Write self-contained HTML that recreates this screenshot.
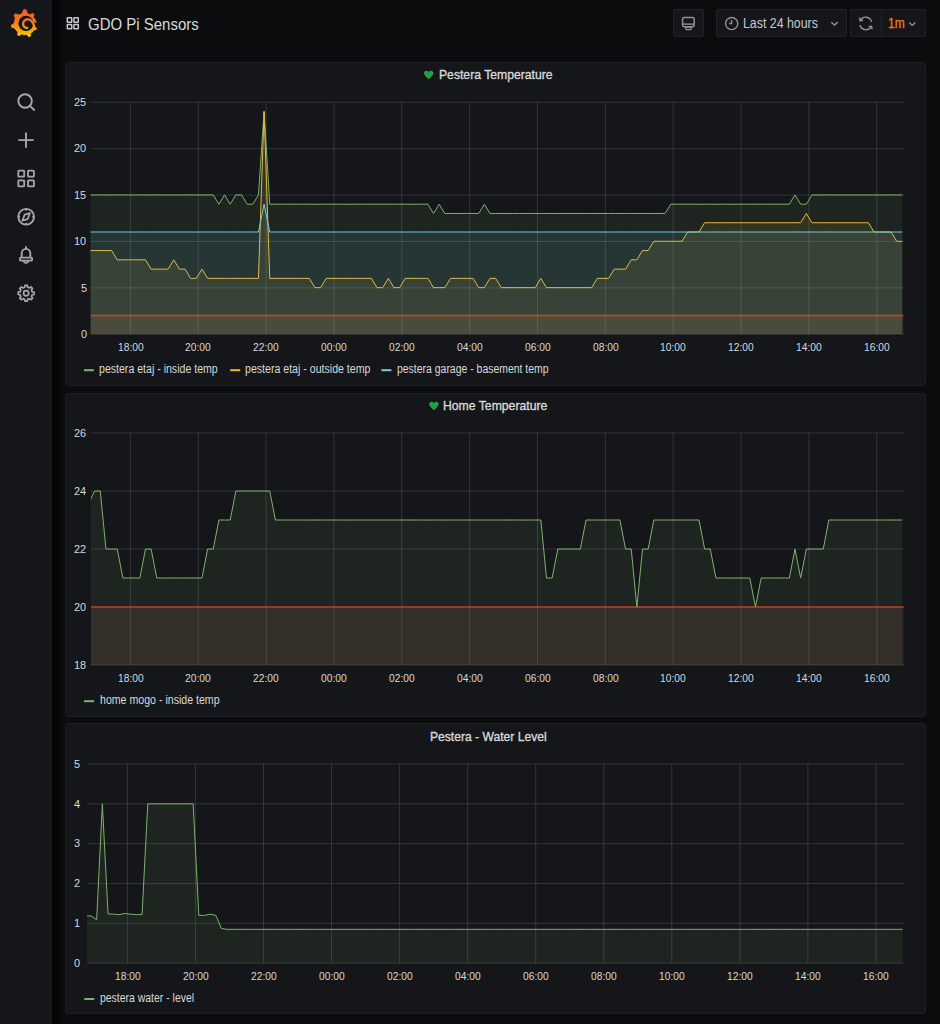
<!DOCTYPE html>
<html><head><meta charset="utf-8"><style>
html,body{margin:0;padding:0;}
body{width:940px;height:1024px;background:#0b0c0e;position:relative;overflow:hidden;font-family:"Liberation Sans",sans-serif;}
.t{position:absolute;white-space:nowrap;line-height:1;transform-origin:0 0;}
.side{position:absolute;left:0;top:0;width:52px;height:1024px;background:#141619;}
.shadow{position:absolute;left:52px;top:0;width:12px;height:1024px;background:linear-gradient(to right,rgba(0,0,0,0.75),rgba(0,0,0,0.55) 35%,rgba(0,0,0,0) 100%);}
.panel{position:absolute;left:65px;width:859px;background:#141619;border:1px solid #1e2024;border-radius:3px;}
.btn{position:absolute;top:9px;height:26px;background:#141619;border:1px solid #202226;border-radius:2px;}
svg{position:absolute;left:0;top:0;}
</style></head><body>
<div class="side"></div><div class="shadow"></div>
<div class="btn" style="left:673px;width:29px"></div>
<div class="btn" style="left:716px;width:129px"></div>
<div class="btn" style="left:850px;width:74px"></div>
<div class="panel" style="top:62.0px;height:322.0px"></div><div class="panel" style="top:393.0px;height:322.0px"></div><div class="panel" style="top:723.0px;height:289.0px"></div>
<svg width="940" height="1024" viewBox="0 0 940 1024">
<line x1="90.50" y1="334.30" x2="903.80" y2="334.30" stroke="rgba(255,255,255,0.13)" stroke-width="1" /><line x1="90.50" y1="287.90" x2="903.80" y2="287.90" stroke="rgba(255,255,255,0.13)" stroke-width="1" /><line x1="90.50" y1="241.50" x2="903.80" y2="241.50" stroke="rgba(255,255,255,0.13)" stroke-width="1" /><line x1="90.50" y1="195.10" x2="903.80" y2="195.10" stroke="rgba(255,255,255,0.13)" stroke-width="1" /><line x1="90.50" y1="148.70" x2="903.80" y2="148.70" stroke="rgba(255,255,255,0.13)" stroke-width="1" /><line x1="90.50" y1="102.30" x2="903.80" y2="102.30" stroke="rgba(255,255,255,0.13)" stroke-width="1" /><line x1="130.40" y1="102.30" x2="130.40" y2="334.30" stroke="rgba(255,255,255,0.13)" stroke-width="1" /><line x1="198.25" y1="102.30" x2="198.25" y2="334.30" stroke="rgba(255,255,255,0.13)" stroke-width="1" /><line x1="266.10" y1="102.30" x2="266.10" y2="334.30" stroke="rgba(255,255,255,0.13)" stroke-width="1" /><line x1="333.95" y1="102.30" x2="333.95" y2="334.30" stroke="rgba(255,255,255,0.13)" stroke-width="1" /><line x1="401.80" y1="102.30" x2="401.80" y2="334.30" stroke="rgba(255,255,255,0.13)" stroke-width="1" /><line x1="469.65" y1="102.30" x2="469.65" y2="334.30" stroke="rgba(255,255,255,0.13)" stroke-width="1" /><line x1="537.50" y1="102.30" x2="537.50" y2="334.30" stroke="rgba(255,255,255,0.13)" stroke-width="1" /><line x1="605.35" y1="102.30" x2="605.35" y2="334.30" stroke="rgba(255,255,255,0.13)" stroke-width="1" /><line x1="673.20" y1="102.30" x2="673.20" y2="334.30" stroke="rgba(255,255,255,0.13)" stroke-width="1" /><line x1="741.05" y1="102.30" x2="741.05" y2="334.30" stroke="rgba(255,255,255,0.13)" stroke-width="1" /><line x1="808.90" y1="102.30" x2="808.90" y2="334.30" stroke="rgba(255,255,255,0.13)" stroke-width="1" /><line x1="876.75" y1="102.30" x2="876.75" y2="334.30" stroke="rgba(255,255,255,0.13)" stroke-width="1" /><line x1="90.80" y1="665.00" x2="903.80" y2="665.00" stroke="rgba(255,255,255,0.13)" stroke-width="1" /><line x1="90.80" y1="607.00" x2="903.80" y2="607.00" stroke="rgba(255,255,255,0.13)" stroke-width="1" /><line x1="90.80" y1="549.00" x2="903.80" y2="549.00" stroke="rgba(255,255,255,0.13)" stroke-width="1" /><line x1="90.80" y1="491.00" x2="903.80" y2="491.00" stroke="rgba(255,255,255,0.13)" stroke-width="1" /><line x1="90.80" y1="433.00" x2="903.80" y2="433.00" stroke="rgba(255,255,255,0.13)" stroke-width="1" /><line x1="130.40" y1="433.00" x2="130.40" y2="665.00" stroke="rgba(255,255,255,0.13)" stroke-width="1" /><line x1="198.25" y1="433.00" x2="198.25" y2="665.00" stroke="rgba(255,255,255,0.13)" stroke-width="1" /><line x1="266.10" y1="433.00" x2="266.10" y2="665.00" stroke="rgba(255,255,255,0.13)" stroke-width="1" /><line x1="333.95" y1="433.00" x2="333.95" y2="665.00" stroke="rgba(255,255,255,0.13)" stroke-width="1" /><line x1="401.80" y1="433.00" x2="401.80" y2="665.00" stroke="rgba(255,255,255,0.13)" stroke-width="1" /><line x1="469.65" y1="433.00" x2="469.65" y2="665.00" stroke="rgba(255,255,255,0.13)" stroke-width="1" /><line x1="537.50" y1="433.00" x2="537.50" y2="665.00" stroke="rgba(255,255,255,0.13)" stroke-width="1" /><line x1="605.35" y1="433.00" x2="605.35" y2="665.00" stroke="rgba(255,255,255,0.13)" stroke-width="1" /><line x1="673.20" y1="433.00" x2="673.20" y2="665.00" stroke="rgba(255,255,255,0.13)" stroke-width="1" /><line x1="741.05" y1="433.00" x2="741.05" y2="665.00" stroke="rgba(255,255,255,0.13)" stroke-width="1" /><line x1="808.90" y1="433.00" x2="808.90" y2="665.00" stroke="rgba(255,255,255,0.13)" stroke-width="1" /><line x1="876.75" y1="433.00" x2="876.75" y2="665.00" stroke="rgba(255,255,255,0.13)" stroke-width="1" /><line x1="87.10" y1="963.20" x2="904.30" y2="963.20" stroke="rgba(255,255,255,0.13)" stroke-width="1" /><line x1="87.10" y1="923.36" x2="904.30" y2="923.36" stroke="rgba(255,255,255,0.13)" stroke-width="1" /><line x1="87.10" y1="883.52" x2="904.30" y2="883.52" stroke="rgba(255,255,255,0.13)" stroke-width="1" /><line x1="87.10" y1="843.68" x2="904.30" y2="843.68" stroke="rgba(255,255,255,0.13)" stroke-width="1" /><line x1="87.10" y1="803.84" x2="904.30" y2="803.84" stroke="rgba(255,255,255,0.13)" stroke-width="1" /><line x1="87.10" y1="764.00" x2="904.30" y2="764.00" stroke="rgba(255,255,255,0.13)" stroke-width="1" /><line x1="127.40" y1="764.00" x2="127.40" y2="963.20" stroke="rgba(255,255,255,0.13)" stroke-width="1" /><line x1="195.45" y1="764.00" x2="195.45" y2="963.20" stroke="rgba(255,255,255,0.13)" stroke-width="1" /><line x1="263.50" y1="764.00" x2="263.50" y2="963.20" stroke="rgba(255,255,255,0.13)" stroke-width="1" /><line x1="331.55" y1="764.00" x2="331.55" y2="963.20" stroke="rgba(255,255,255,0.13)" stroke-width="1" /><line x1="399.60" y1="764.00" x2="399.60" y2="963.20" stroke="rgba(255,255,255,0.13)" stroke-width="1" /><line x1="467.65" y1="764.00" x2="467.65" y2="963.20" stroke="rgba(255,255,255,0.13)" stroke-width="1" /><line x1="535.70" y1="764.00" x2="535.70" y2="963.20" stroke="rgba(255,255,255,0.13)" stroke-width="1" /><line x1="603.75" y1="764.00" x2="603.75" y2="963.20" stroke="rgba(255,255,255,0.13)" stroke-width="1" /><line x1="671.80" y1="764.00" x2="671.80" y2="963.20" stroke="rgba(255,255,255,0.13)" stroke-width="1" /><line x1="739.85" y1="764.00" x2="739.85" y2="963.20" stroke="rgba(255,255,255,0.13)" stroke-width="1" /><line x1="807.90" y1="764.00" x2="807.90" y2="963.20" stroke="rgba(255,255,255,0.13)" stroke-width="1" /><line x1="875.95" y1="764.00" x2="875.95" y2="963.20" stroke="rgba(255,255,255,0.13)" stroke-width="1" /><clipPath id="c1"><rect x="90.5" y="82.2" width="813.3" height="251.8"/></clipPath><g clip-path="url(#c1)"><rect x="90.5" y="315.46" width="813.3" height="18.54" fill="rgba(234,112,112,0.12)"/><line x1="90.5" y1="315.46" x2="903.8" y2="315.46" stroke="rgba(237,46,24,0.6)" stroke-width="2"/><polygon points="89.00,334.0 89.00,194.92 94.65,194.92 100.30,194.92 105.95,194.92 111.59,194.92 117.24,194.92 122.89,194.92 128.54,194.92 134.19,194.92 139.83,194.92 145.48,194.92 151.13,194.92 156.78,194.92 162.43,194.92 168.07,194.92 173.72,194.92 179.37,194.92 185.02,194.92 190.67,194.92 196.31,194.92 201.96,194.92 207.61,194.92 213.26,194.92 218.91,204.19 224.55,194.92 230.20,204.19 235.85,194.92 241.50,194.92 247.15,204.19 252.79,204.19 258.44,194.92 264.09,111.47 269.74,204.19 275.39,204.19 281.03,204.19 286.68,204.19 292.33,204.19 297.98,204.19 303.63,204.19 309.27,204.19 314.92,204.19 320.57,204.19 326.22,204.19 331.87,204.19 337.51,204.19 343.16,204.19 348.81,204.19 354.46,204.19 360.11,204.19 365.75,204.19 371.40,204.19 377.05,204.19 382.70,204.19 388.35,204.19 393.99,204.19 399.64,204.19 405.29,204.19 410.94,204.19 416.59,204.19 422.23,204.19 427.88,204.19 433.53,213.46 439.18,204.19 444.83,213.46 450.47,213.46 456.12,213.46 461.77,213.46 467.42,213.46 473.07,213.46 478.71,213.46 484.36,204.19 490.01,213.46 495.66,213.46 501.31,213.46 506.95,213.46 512.60,213.46 518.25,213.46 523.90,213.46 529.55,213.46 535.19,213.46 540.84,213.46 546.49,213.46 552.14,213.46 557.79,213.46 563.43,213.46 569.08,213.46 574.73,213.46 580.38,213.46 586.03,213.46 591.67,213.46 597.32,213.46 602.97,213.46 608.62,213.46 614.27,213.46 619.91,213.46 625.56,213.46 631.21,213.46 636.86,213.46 642.51,213.46 648.15,213.46 653.80,213.46 659.45,213.46 665.10,213.46 670.75,204.19 676.39,204.19 682.04,204.19 687.69,204.19 693.34,204.19 698.99,204.19 704.63,204.19 710.28,204.19 715.93,204.19 721.58,204.19 727.23,204.19 732.87,204.19 738.52,204.19 744.17,204.19 749.82,204.19 755.47,204.19 761.11,204.19 766.76,204.19 772.41,204.19 778.06,204.19 783.71,204.19 789.35,204.19 795.00,194.92 800.65,204.19 806.30,204.19 811.95,194.92 817.59,194.92 823.24,194.92 828.89,194.92 834.54,194.92 840.19,194.92 845.83,194.92 851.48,194.92 857.13,194.92 862.78,194.92 868.43,194.92 874.07,194.92 879.72,194.92 885.37,194.92 891.02,194.92 896.67,194.92 902.31,194.92 902.31,334.0" fill="#7eb26d" fill-opacity="0.1"/><polyline points="89.00,194.92 94.65,194.92 100.30,194.92 105.95,194.92 111.59,194.92 117.24,194.92 122.89,194.92 128.54,194.92 134.19,194.92 139.83,194.92 145.48,194.92 151.13,194.92 156.78,194.92 162.43,194.92 168.07,194.92 173.72,194.92 179.37,194.92 185.02,194.92 190.67,194.92 196.31,194.92 201.96,194.92 207.61,194.92 213.26,194.92 218.91,204.19 224.55,194.92 230.20,204.19 235.85,194.92 241.50,194.92 247.15,204.19 252.79,204.19 258.44,194.92 264.09,111.47 269.74,204.19 275.39,204.19 281.03,204.19 286.68,204.19 292.33,204.19 297.98,204.19 303.63,204.19 309.27,204.19 314.92,204.19 320.57,204.19 326.22,204.19 331.87,204.19 337.51,204.19 343.16,204.19 348.81,204.19 354.46,204.19 360.11,204.19 365.75,204.19 371.40,204.19 377.05,204.19 382.70,204.19 388.35,204.19 393.99,204.19 399.64,204.19 405.29,204.19 410.94,204.19 416.59,204.19 422.23,204.19 427.88,204.19 433.53,213.46 439.18,204.19 444.83,213.46 450.47,213.46 456.12,213.46 461.77,213.46 467.42,213.46 473.07,213.46 478.71,213.46 484.36,204.19 490.01,213.46 495.66,213.46 501.31,213.46 506.95,213.46 512.60,213.46 518.25,213.46 523.90,213.46 529.55,213.46 535.19,213.46 540.84,213.46 546.49,213.46 552.14,213.46 557.79,213.46 563.43,213.46 569.08,213.46 574.73,213.46 580.38,213.46 586.03,213.46 591.67,213.46 597.32,213.46 602.97,213.46 608.62,213.46 614.27,213.46 619.91,213.46 625.56,213.46 631.21,213.46 636.86,213.46 642.51,213.46 648.15,213.46 653.80,213.46 659.45,213.46 665.10,213.46 670.75,204.19 676.39,204.19 682.04,204.19 687.69,204.19 693.34,204.19 698.99,204.19 704.63,204.19 710.28,204.19 715.93,204.19 721.58,204.19 727.23,204.19 732.87,204.19 738.52,204.19 744.17,204.19 749.82,204.19 755.47,204.19 761.11,204.19 766.76,204.19 772.41,204.19 778.06,204.19 783.71,204.19 789.35,204.19 795.00,194.92 800.65,204.19 806.30,204.19 811.95,194.92 817.59,194.92 823.24,194.92 828.89,194.92 834.54,194.92 840.19,194.92 845.83,194.92 851.48,194.92 857.13,194.92 862.78,194.92 868.43,194.92 874.07,194.92 879.72,194.92 885.37,194.92 891.02,194.92 896.67,194.92 902.31,194.92" fill="none" stroke="#7eb26d" stroke-width="1.0" stroke-linejoin="round"/><polygon points="89.00,334.0 89.00,250.55 94.65,250.55 100.30,250.55 105.95,250.55 111.59,250.55 117.24,259.82 122.89,259.82 128.54,259.82 134.19,259.82 139.83,259.82 145.48,259.82 151.13,269.10 156.78,269.10 162.43,269.10 168.07,269.10 173.72,259.82 179.37,269.10 185.02,269.10 190.67,278.37 196.31,278.37 201.96,269.10 207.61,278.37 213.26,278.37 218.91,278.37 224.55,278.37 230.20,278.37 235.85,278.37 241.50,278.37 247.15,278.37 252.79,278.37 258.44,278.37 264.09,111.47 269.74,278.37 275.39,278.37 281.03,278.37 286.68,278.37 292.33,278.37 297.98,278.37 303.63,278.37 309.27,278.37 314.92,287.64 320.57,287.64 326.22,278.37 331.87,278.37 337.51,278.37 343.16,278.37 348.81,278.37 354.46,278.37 360.11,278.37 365.75,278.37 371.40,278.37 377.05,287.64 382.70,287.64 388.35,278.37 393.99,287.64 399.64,287.64 405.29,278.37 410.94,278.37 416.59,278.37 422.23,278.37 427.88,278.37 433.53,287.64 439.18,287.64 444.83,287.64 450.47,278.37 456.12,278.37 461.77,278.37 467.42,278.37 473.07,278.37 478.71,287.64 484.36,287.64 490.01,278.37 495.66,278.37 501.31,287.64 506.95,287.64 512.60,287.64 518.25,287.64 523.90,287.64 529.55,287.64 535.19,287.64 540.84,278.37 546.49,287.64 552.14,287.64 557.79,287.64 563.43,287.64 569.08,287.64 574.73,287.64 580.38,287.64 586.03,287.64 591.67,287.64 597.32,278.37 602.97,278.37 608.62,278.37 614.27,269.10 619.91,269.10 625.56,269.10 631.21,259.82 636.86,259.82 642.51,250.55 648.15,250.55 653.80,241.28 659.45,241.28 665.10,241.28 670.75,241.28 676.39,241.28 682.04,241.28 687.69,232.01 693.34,232.01 698.99,232.01 704.63,222.74 710.28,222.74 715.93,222.74 721.58,222.74 727.23,222.74 732.87,222.74 738.52,222.74 744.17,222.74 749.82,222.74 755.47,222.74 761.11,222.74 766.76,222.74 772.41,222.74 778.06,222.74 783.71,222.74 789.35,222.74 795.00,222.74 800.65,222.74 806.30,213.46 811.95,222.74 817.59,222.74 823.24,222.74 828.89,222.74 834.54,222.74 840.19,222.74 845.83,222.74 851.48,222.74 857.13,222.74 862.78,222.74 868.43,222.74 874.07,232.01 879.72,232.01 885.37,232.01 891.02,232.01 896.67,241.28 902.31,241.28 902.31,334.0" fill="#eab839" fill-opacity="0.1"/><polyline points="89.00,250.55 94.65,250.55 100.30,250.55 105.95,250.55 111.59,250.55 117.24,259.82 122.89,259.82 128.54,259.82 134.19,259.82 139.83,259.82 145.48,259.82 151.13,269.10 156.78,269.10 162.43,269.10 168.07,269.10 173.72,259.82 179.37,269.10 185.02,269.10 190.67,278.37 196.31,278.37 201.96,269.10 207.61,278.37 213.26,278.37 218.91,278.37 224.55,278.37 230.20,278.37 235.85,278.37 241.50,278.37 247.15,278.37 252.79,278.37 258.44,278.37 264.09,111.47 269.74,278.37 275.39,278.37 281.03,278.37 286.68,278.37 292.33,278.37 297.98,278.37 303.63,278.37 309.27,278.37 314.92,287.64 320.57,287.64 326.22,278.37 331.87,278.37 337.51,278.37 343.16,278.37 348.81,278.37 354.46,278.37 360.11,278.37 365.75,278.37 371.40,278.37 377.05,287.64 382.70,287.64 388.35,278.37 393.99,287.64 399.64,287.64 405.29,278.37 410.94,278.37 416.59,278.37 422.23,278.37 427.88,278.37 433.53,287.64 439.18,287.64 444.83,287.64 450.47,278.37 456.12,278.37 461.77,278.37 467.42,278.37 473.07,278.37 478.71,287.64 484.36,287.64 490.01,278.37 495.66,278.37 501.31,287.64 506.95,287.64 512.60,287.64 518.25,287.64 523.90,287.64 529.55,287.64 535.19,287.64 540.84,278.37 546.49,287.64 552.14,287.64 557.79,287.64 563.43,287.64 569.08,287.64 574.73,287.64 580.38,287.64 586.03,287.64 591.67,287.64 597.32,278.37 602.97,278.37 608.62,278.37 614.27,269.10 619.91,269.10 625.56,269.10 631.21,259.82 636.86,259.82 642.51,250.55 648.15,250.55 653.80,241.28 659.45,241.28 665.10,241.28 670.75,241.28 676.39,241.28 682.04,241.28 687.69,232.01 693.34,232.01 698.99,232.01 704.63,222.74 710.28,222.74 715.93,222.74 721.58,222.74 727.23,222.74 732.87,222.74 738.52,222.74 744.17,222.74 749.82,222.74 755.47,222.74 761.11,222.74 766.76,222.74 772.41,222.74 778.06,222.74 783.71,222.74 789.35,222.74 795.00,222.74 800.65,222.74 806.30,213.46 811.95,222.74 817.59,222.74 823.24,222.74 828.89,222.74 834.54,222.74 840.19,222.74 845.83,222.74 851.48,222.74 857.13,222.74 862.78,222.74 868.43,222.74 874.07,232.01 879.72,232.01 885.37,232.01 891.02,232.01 896.67,241.28 902.31,241.28" fill="none" stroke="#eab839" stroke-width="1.0" stroke-linejoin="round"/><polygon points="89.00,334.0 89.00,232.01 94.65,232.01 100.30,232.01 105.95,232.01 111.59,232.01 117.24,232.01 122.89,232.01 128.54,232.01 134.19,232.01 139.83,232.01 145.48,232.01 151.13,232.01 156.78,232.01 162.43,232.01 168.07,232.01 173.72,232.01 179.37,232.01 185.02,232.01 190.67,232.01 196.31,232.01 201.96,232.01 207.61,232.01 213.26,232.01 218.91,232.01 224.55,232.01 230.20,232.01 235.85,232.01 241.50,232.01 247.15,232.01 252.79,232.01 258.44,232.01 264.09,204.19 269.74,232.01 275.39,232.01 281.03,232.01 286.68,232.01 292.33,232.01 297.98,232.01 303.63,232.01 309.27,232.01 314.92,232.01 320.57,232.01 326.22,232.01 331.87,232.01 337.51,232.01 343.16,232.01 348.81,232.01 354.46,232.01 360.11,232.01 365.75,232.01 371.40,232.01 377.05,232.01 382.70,232.01 388.35,232.01 393.99,232.01 399.64,232.01 405.29,232.01 410.94,232.01 416.59,232.01 422.23,232.01 427.88,232.01 433.53,232.01 439.18,232.01 444.83,232.01 450.47,232.01 456.12,232.01 461.77,232.01 467.42,232.01 473.07,232.01 478.71,232.01 484.36,232.01 490.01,232.01 495.66,232.01 501.31,232.01 506.95,232.01 512.60,232.01 518.25,232.01 523.90,232.01 529.55,232.01 535.19,232.01 540.84,232.01 546.49,232.01 552.14,232.01 557.79,232.01 563.43,232.01 569.08,232.01 574.73,232.01 580.38,232.01 586.03,232.01 591.67,232.01 597.32,232.01 602.97,232.01 608.62,232.01 614.27,232.01 619.91,232.01 625.56,232.01 631.21,232.01 636.86,232.01 642.51,232.01 648.15,232.01 653.80,232.01 659.45,232.01 665.10,232.01 670.75,232.01 676.39,232.01 682.04,232.01 687.69,232.01 693.34,232.01 698.99,232.01 704.63,232.01 710.28,232.01 715.93,232.01 721.58,232.01 727.23,232.01 732.87,232.01 738.52,232.01 744.17,232.01 749.82,232.01 755.47,232.01 761.11,232.01 766.76,232.01 772.41,232.01 778.06,232.01 783.71,232.01 789.35,232.01 795.00,232.01 800.65,232.01 806.30,232.01 811.95,232.01 817.59,232.01 823.24,232.01 828.89,232.01 834.54,232.01 840.19,232.01 845.83,232.01 851.48,232.01 857.13,232.01 862.78,232.01 868.43,232.01 874.07,232.01 879.72,232.01 885.37,232.01 891.02,232.01 896.67,232.01 902.31,232.01 902.31,334.0" fill="#6ed0e0" fill-opacity="0.1"/><polyline points="89.00,232.01 94.65,232.01 100.30,232.01 105.95,232.01 111.59,232.01 117.24,232.01 122.89,232.01 128.54,232.01 134.19,232.01 139.83,232.01 145.48,232.01 151.13,232.01 156.78,232.01 162.43,232.01 168.07,232.01 173.72,232.01 179.37,232.01 185.02,232.01 190.67,232.01 196.31,232.01 201.96,232.01 207.61,232.01 213.26,232.01 218.91,232.01 224.55,232.01 230.20,232.01 235.85,232.01 241.50,232.01 247.15,232.01 252.79,232.01 258.44,232.01 264.09,204.19 269.74,232.01 275.39,232.01 281.03,232.01 286.68,232.01 292.33,232.01 297.98,232.01 303.63,232.01 309.27,232.01 314.92,232.01 320.57,232.01 326.22,232.01 331.87,232.01 337.51,232.01 343.16,232.01 348.81,232.01 354.46,232.01 360.11,232.01 365.75,232.01 371.40,232.01 377.05,232.01 382.70,232.01 388.35,232.01 393.99,232.01 399.64,232.01 405.29,232.01 410.94,232.01 416.59,232.01 422.23,232.01 427.88,232.01 433.53,232.01 439.18,232.01 444.83,232.01 450.47,232.01 456.12,232.01 461.77,232.01 467.42,232.01 473.07,232.01 478.71,232.01 484.36,232.01 490.01,232.01 495.66,232.01 501.31,232.01 506.95,232.01 512.60,232.01 518.25,232.01 523.90,232.01 529.55,232.01 535.19,232.01 540.84,232.01 546.49,232.01 552.14,232.01 557.79,232.01 563.43,232.01 569.08,232.01 574.73,232.01 580.38,232.01 586.03,232.01 591.67,232.01 597.32,232.01 602.97,232.01 608.62,232.01 614.27,232.01 619.91,232.01 625.56,232.01 631.21,232.01 636.86,232.01 642.51,232.01 648.15,232.01 653.80,232.01 659.45,232.01 665.10,232.01 670.75,232.01 676.39,232.01 682.04,232.01 687.69,232.01 693.34,232.01 698.99,232.01 704.63,232.01 710.28,232.01 715.93,232.01 721.58,232.01 727.23,232.01 732.87,232.01 738.52,232.01 744.17,232.01 749.82,232.01 755.47,232.01 761.11,232.01 766.76,232.01 772.41,232.01 778.06,232.01 783.71,232.01 789.35,232.01 795.00,232.01 800.65,232.01 806.30,232.01 811.95,232.01 817.59,232.01 823.24,232.01 828.89,232.01 834.54,232.01 840.19,232.01 845.83,232.01 851.48,232.01 857.13,232.01 862.78,232.01 868.43,232.01 874.07,232.01 879.72,232.01 885.37,232.01 891.02,232.01 896.67,232.01 902.31,232.01" fill="none" stroke="#6ed0e0" stroke-width="1.0" stroke-linejoin="round"/></g><clipPath id="c2"><rect x="90.8" y="413.0" width="813.0" height="252.0"/></clipPath><g clip-path="url(#c2)"><rect x="90.8" y="607.00" width="813.0" height="58.00" fill="rgba(234,112,112,0.12)"/><line x1="90.8" y1="607.00" x2="903.8" y2="607.00" stroke="rgba(237,46,24,0.6)" stroke-width="2"/><polygon points="89.00,665.0 89.00,502.60 94.65,491.00 100.30,491.00 105.95,549.00 111.59,549.00 117.24,549.00 122.89,578.00 128.54,578.00 134.19,578.00 139.83,578.00 145.48,549.00 151.13,549.00 156.78,578.00 162.43,578.00 168.07,578.00 173.72,578.00 179.37,578.00 185.02,578.00 190.67,578.00 196.31,578.00 201.96,578.00 207.61,549.00 213.26,549.00 218.91,520.00 224.55,520.00 230.20,520.00 235.85,491.00 241.50,491.00 247.15,491.00 252.79,491.00 258.44,491.00 264.09,491.00 269.74,491.00 275.39,520.00 281.03,520.00 286.68,520.00 292.33,520.00 297.98,520.00 303.63,520.00 309.27,520.00 314.92,520.00 320.57,520.00 326.22,520.00 331.87,520.00 337.51,520.00 343.16,520.00 348.81,520.00 354.46,520.00 360.11,520.00 365.75,520.00 371.40,520.00 377.05,520.00 382.70,520.00 388.35,520.00 393.99,520.00 399.64,520.00 405.29,520.00 410.94,520.00 416.59,520.00 422.23,520.00 427.88,520.00 433.53,520.00 439.18,520.00 444.83,520.00 450.47,520.00 456.12,520.00 461.77,520.00 467.42,520.00 473.07,520.00 478.71,520.00 484.36,520.00 490.01,520.00 495.66,520.00 501.31,520.00 506.95,520.00 512.60,520.00 518.25,520.00 523.90,520.00 529.55,520.00 535.19,520.00 540.84,520.00 546.49,578.00 552.14,578.00 557.79,549.00 563.43,549.00 569.08,549.00 574.73,549.00 580.38,549.00 586.03,520.00 591.67,520.00 597.32,520.00 602.97,520.00 608.62,520.00 614.27,520.00 619.91,520.00 625.56,549.00 631.21,549.00 636.86,607.00 642.51,549.00 648.15,549.00 653.80,520.00 659.45,520.00 665.10,520.00 670.75,520.00 676.39,520.00 682.04,520.00 687.69,520.00 693.34,520.00 698.99,520.00 704.63,549.00 710.28,549.00 715.93,578.00 721.58,578.00 727.23,578.00 732.87,578.00 738.52,578.00 744.17,578.00 749.82,578.00 755.47,607.00 761.11,578.00 766.76,578.00 772.41,578.00 778.06,578.00 783.71,578.00 789.35,578.00 795.00,549.00 800.65,578.00 806.30,549.00 811.95,549.00 817.59,549.00 823.24,549.00 828.89,520.00 834.54,520.00 840.19,520.00 845.83,520.00 851.48,520.00 857.13,520.00 862.78,520.00 868.43,520.00 874.07,520.00 879.72,520.00 885.37,520.00 891.02,520.00 896.67,520.00 902.31,520.00 902.31,665.0" fill="#7eb26d" fill-opacity="0.1"/><polyline points="89.00,502.60 94.65,491.00 100.30,491.00 105.95,549.00 111.59,549.00 117.24,549.00 122.89,578.00 128.54,578.00 134.19,578.00 139.83,578.00 145.48,549.00 151.13,549.00 156.78,578.00 162.43,578.00 168.07,578.00 173.72,578.00 179.37,578.00 185.02,578.00 190.67,578.00 196.31,578.00 201.96,578.00 207.61,549.00 213.26,549.00 218.91,520.00 224.55,520.00 230.20,520.00 235.85,491.00 241.50,491.00 247.15,491.00 252.79,491.00 258.44,491.00 264.09,491.00 269.74,491.00 275.39,520.00 281.03,520.00 286.68,520.00 292.33,520.00 297.98,520.00 303.63,520.00 309.27,520.00 314.92,520.00 320.57,520.00 326.22,520.00 331.87,520.00 337.51,520.00 343.16,520.00 348.81,520.00 354.46,520.00 360.11,520.00 365.75,520.00 371.40,520.00 377.05,520.00 382.70,520.00 388.35,520.00 393.99,520.00 399.64,520.00 405.29,520.00 410.94,520.00 416.59,520.00 422.23,520.00 427.88,520.00 433.53,520.00 439.18,520.00 444.83,520.00 450.47,520.00 456.12,520.00 461.77,520.00 467.42,520.00 473.07,520.00 478.71,520.00 484.36,520.00 490.01,520.00 495.66,520.00 501.31,520.00 506.95,520.00 512.60,520.00 518.25,520.00 523.90,520.00 529.55,520.00 535.19,520.00 540.84,520.00 546.49,578.00 552.14,578.00 557.79,549.00 563.43,549.00 569.08,549.00 574.73,549.00 580.38,549.00 586.03,520.00 591.67,520.00 597.32,520.00 602.97,520.00 608.62,520.00 614.27,520.00 619.91,520.00 625.56,549.00 631.21,549.00 636.86,607.00 642.51,549.00 648.15,549.00 653.80,520.00 659.45,520.00 665.10,520.00 670.75,520.00 676.39,520.00 682.04,520.00 687.69,520.00 693.34,520.00 698.99,520.00 704.63,549.00 710.28,549.00 715.93,578.00 721.58,578.00 727.23,578.00 732.87,578.00 738.52,578.00 744.17,578.00 749.82,578.00 755.47,607.00 761.11,578.00 766.76,578.00 772.41,578.00 778.06,578.00 783.71,578.00 789.35,578.00 795.00,549.00 800.65,578.00 806.30,549.00 811.95,549.00 817.59,549.00 823.24,549.00 828.89,520.00 834.54,520.00 840.19,520.00 845.83,520.00 851.48,520.00 857.13,520.00 862.78,520.00 868.43,520.00 874.07,520.00 879.72,520.00 885.37,520.00 891.02,520.00 896.67,520.00 902.31,520.00" fill="none" stroke="#7eb26d" stroke-width="1.0" stroke-linejoin="round"/></g><clipPath id="c3"><rect x="87.1" y="744" width="817.1999999999999" height="219.20000000000005"/></clipPath><g clip-path="url(#c3)"><polygon points="85.33,963.2 85.33,916.19 91.00,915.79 96.67,919.77 102.35,803.84 108.03,913.80 113.70,914.20 119.38,914.60 125.05,913.40 130.72,914.20 136.40,914.60 142.07,914.60 147.75,803.84 153.43,803.84 159.10,803.84 164.77,803.84 170.45,803.84 176.12,803.84 181.80,803.84 187.47,803.84 193.15,803.84 198.82,915.39 204.50,915.39 210.18,914.20 215.85,915.39 221.53,928.54 227.20,929.34 232.88,929.34 238.55,929.34 244.22,929.34 249.90,929.34 255.57,929.34 261.25,929.34 266.92,929.34 272.60,929.34 278.27,929.34 283.95,929.34 289.62,929.34 295.30,929.34 300.98,929.34 306.65,929.34 312.32,929.34 318.00,929.34 323.67,929.34 329.35,929.34 335.02,929.34 340.70,929.34 346.38,929.34 352.05,929.34 357.72,929.34 363.40,929.34 369.07,929.34 374.75,929.34 380.43,929.34 386.10,929.34 391.77,929.34 397.45,929.34 403.12,929.34 408.80,929.34 414.47,929.34 420.15,929.34 425.82,929.34 431.50,929.34 437.18,929.34 442.85,929.34 448.52,929.34 454.20,929.34 459.88,929.34 465.55,929.34 471.22,929.34 476.90,929.34 482.57,929.34 488.25,929.34 493.93,929.34 499.60,929.34 505.27,929.34 510.95,929.34 516.62,929.34 522.30,929.34 527.97,929.34 533.65,929.34 539.33,929.34 545.00,929.34 550.67,929.34 556.35,929.34 562.02,929.34 567.70,929.34 573.38,929.34 579.05,929.34 584.72,929.34 590.40,929.34 596.08,929.34 601.75,929.34 607.42,929.34 613.10,929.34 618.77,929.34 624.45,929.34 630.12,929.34 635.80,929.34 641.48,929.34 647.15,929.34 652.82,929.34 658.50,929.34 664.17,929.34 669.85,929.34 675.52,929.34 681.20,929.34 686.88,929.34 692.55,929.34 698.23,929.34 703.90,929.34 709.57,929.34 715.25,929.34 720.92,929.34 726.60,929.34 732.27,929.34 737.95,929.34 743.62,929.34 749.30,929.34 754.98,929.34 760.65,929.34 766.32,929.34 772.00,929.34 777.67,929.34 783.35,929.34 789.02,929.34 794.70,929.34 800.38,929.34 806.05,929.34 811.73,929.34 817.40,929.34 823.07,929.34 828.75,929.34 834.42,929.34 840.10,929.34 845.77,929.34 851.45,929.34 857.12,929.34 862.80,929.34 868.48,929.34 874.15,929.34 879.82,929.34 885.50,929.34 891.17,929.34 896.85,929.34 902.52,929.34 902.52,963.2" fill="#7eb26d" fill-opacity="0.1"/><polyline points="85.33,916.19 91.00,915.79 96.67,919.77 102.35,803.84 108.03,913.80 113.70,914.20 119.38,914.60 125.05,913.40 130.72,914.20 136.40,914.60 142.07,914.60 147.75,803.84 153.43,803.84 159.10,803.84 164.77,803.84 170.45,803.84 176.12,803.84 181.80,803.84 187.47,803.84 193.15,803.84 198.82,915.39 204.50,915.39 210.18,914.20 215.85,915.39 221.53,928.54 227.20,929.34 232.88,929.34 238.55,929.34 244.22,929.34 249.90,929.34 255.57,929.34 261.25,929.34 266.92,929.34 272.60,929.34 278.27,929.34 283.95,929.34 289.62,929.34 295.30,929.34 300.98,929.34 306.65,929.34 312.32,929.34 318.00,929.34 323.67,929.34 329.35,929.34 335.02,929.34 340.70,929.34 346.38,929.34 352.05,929.34 357.72,929.34 363.40,929.34 369.07,929.34 374.75,929.34 380.43,929.34 386.10,929.34 391.77,929.34 397.45,929.34 403.12,929.34 408.80,929.34 414.47,929.34 420.15,929.34 425.82,929.34 431.50,929.34 437.18,929.34 442.85,929.34 448.52,929.34 454.20,929.34 459.88,929.34 465.55,929.34 471.22,929.34 476.90,929.34 482.57,929.34 488.25,929.34 493.93,929.34 499.60,929.34 505.27,929.34 510.95,929.34 516.62,929.34 522.30,929.34 527.97,929.34 533.65,929.34 539.33,929.34 545.00,929.34 550.67,929.34 556.35,929.34 562.02,929.34 567.70,929.34 573.38,929.34 579.05,929.34 584.72,929.34 590.40,929.34 596.08,929.34 601.75,929.34 607.42,929.34 613.10,929.34 618.77,929.34 624.45,929.34 630.12,929.34 635.80,929.34 641.48,929.34 647.15,929.34 652.82,929.34 658.50,929.34 664.17,929.34 669.85,929.34 675.52,929.34 681.20,929.34 686.88,929.34 692.55,929.34 698.23,929.34 703.90,929.34 709.57,929.34 715.25,929.34 720.92,929.34 726.60,929.34 732.27,929.34 737.95,929.34 743.62,929.34 749.30,929.34 754.98,929.34 760.65,929.34 766.32,929.34 772.00,929.34 777.67,929.34 783.35,929.34 789.02,929.34 794.70,929.34 800.38,929.34 806.05,929.34 811.73,929.34 817.40,929.34 823.07,929.34 828.75,929.34 834.42,929.34 840.10,929.34 845.77,929.34 851.45,929.34 857.12,929.34 862.80,929.34 868.48,929.34 874.15,929.34 879.82,929.34 885.50,929.34 891.17,929.34 896.85,929.34 902.52,929.34" fill="none" stroke="#7eb26d" stroke-width="1.0" stroke-linejoin="round"/></g><rect x="83.9" y="369.2" width="10" height="2" fill="#7eb26d"/><rect x="230.2" y="369.2" width="10" height="2" fill="#eab839"/><rect x="381.4" y="369.2" width="10" height="2" fill="#6ed0e0"/><rect x="84.1" y="700.2" width="10" height="2" fill="#7eb26d"/><rect x="84.3" y="998.0" width="10" height="2" fill="#7eb26d"/><defs><linearGradient id="lg" x1="0" y1="9" x2="0" y2="37" gradientUnits="userSpaceOnUse"><stop offset="0" stop-color="#f05a28"/><stop offset="0.45" stop-color="#f3771f"/><stop offset="1" stop-color="#fbca0a"/></linearGradient></defs><path d="M15.24,17.99 L14.00,15.29 L15.52,13.71 L18.26,14.86 L20.66,14.44 L22.51,12.42 L23.65,9.65 L25.95,9.65 L27.09,12.42 L28.43,14.24 L30.04,14.75 L32.58,13.29 L34.19,14.64 L33.19,17.40 L34.50,18.60 L35.68,20.66 L36.33,22.58 L36.30,22.40 L33.60,24.20 L34.00,26.60 L34.39,26.24 L36.56,28.13 L35.80,29.93 L32.92,29.68 L32.23,31.76 L30.52,33.01 L30.65,35.92 L28.74,36.69 L26.80,34.51 L24.06,34.77 L21.45,33.94 L19.25,35.84 L17.49,34.83 L18.04,31.97 L16.06,30.20 L14.46,27.96 L11.58,27.37 L11.24,25.27 L13.81,23.82 L14.69,21.01 Z" fill="url(#lg)" stroke="url(#lg)" stroke-width="0.8" stroke-linejoin="round"/><circle cx="26.0" cy="23.4" r="7.6" fill="#141619"/><path d="M32.2,22.0 L37.6,22.9 L37.4,26.0 L32.6,25.0 Z" fill="#141619"/><path d="M27.30,27.80 L26.87,27.83 L26.44,27.80 L26.01,27.73 L25.58,27.60 L25.17,27.41 L24.78,27.18 L24.41,26.89 L24.08,26.56 L23.78,26.18 L23.53,25.76 L23.33,25.32 L23.19,24.84 L23.10,24.35 L23.07,23.84 L23.10,23.32 L23.20,22.81 L23.36,22.30 L23.58,21.81 L23.86,21.35 L24.20,20.92 L24.60,20.53 L25.04,20.19 L25.53,19.90 L26.06,19.66 L26.61,19.49 L27.19,19.39 L27.79,19.36 L28.39,19.40 L28.98,19.52 L29.57,19.70 L30.13,19.96 L30.66,20.29 L31.16,20.69 L31.61,21.14 L32.00,21.65 L32.34,22.21 L32.79,22.76 L33.18,23.39 L33.50,24.10 L33.73,24.86 L33.86,25.68 L33.88,26.53 L33.79,27.41 L33.58,28.30 L33.25,29.18 L32.80,30.04 L32.22,30.86 L31.52,31.62" fill="none" stroke="url(#lg)" stroke-width="2.3" stroke-linecap="round"/><circle cx="25.1" cy="101.0" r="6.75" fill="none" stroke="#a3a8b0" stroke-width="1.9"/><line x1="30.2" y1="106.1" x2="34.2" y2="110.0" stroke="#a3a8b0" stroke-width="1.9" stroke-linecap="round"/><line x1="26" y1="133.2" x2="26" y2="147" stroke="#a3a8b0" stroke-width="1.9" stroke-linecap="round"/><line x1="19.1" y1="140.1" x2="32.9" y2="140.1" stroke="#a3a8b0" stroke-width="1.9" stroke-linecap="round"/><rect x="18.3" y="170.7" width="5.9" height="5.9" rx="0.6" fill="none" stroke="#a3a8b0" stroke-width="1.8"/><rect x="28.0" y="170.7" width="5.9" height="5.9" rx="0.6" fill="none" stroke="#a3a8b0" stroke-width="1.8"/><rect x="18.3" y="180.4" width="5.9" height="5.9" rx="0.6" fill="none" stroke="#a3a8b0" stroke-width="1.8"/><rect x="28.0" y="180.4" width="5.9" height="5.9" rx="0.6" fill="none" stroke="#a3a8b0" stroke-width="1.8"/><circle cx="26.15" cy="216.75" r="7.9" fill="none" stroke="#a3a8b0" stroke-width="1.9"/><line x1="26.15" y1="208.8" x2="26.15" y2="210.6" stroke="#a3a8b0" stroke-width="1.8"/><line x1="26.15" y1="222.9" x2="26.15" y2="224.7" stroke="#a3a8b0" stroke-width="1.8"/><line x1="18.2" y1="216.75" x2="20.0" y2="216.75" stroke="#a3a8b0" stroke-width="1.8"/><line x1="32.3" y1="216.75" x2="34.1" y2="216.75" stroke="#a3a8b0" stroke-width="1.8"/><path d="M29.9,213.1 L27.6,219.1 L22.4,220.6 L24.7,214.6 Z" fill="none" stroke="#a3a8b0" stroke-width="1.7" stroke-linejoin="round"/><path d="M21.7,257.3 L21.7,253.5 A4.3,4.6 0 0 1 30.3,253.5 L30.3,257.3" fill="none" stroke="#a3a8b0" stroke-width="1.9"/><line x1="26" y1="247.0" x2="26" y2="248.8" stroke="#a3a8b0" stroke-width="1.9" stroke-linecap="round"/><rect x="19.9" y="257.6" width="12.2" height="3.0" rx="0.8" fill="none" stroke="#a3a8b0" stroke-width="1.8"/><path d="M23.6,261.2 A2.5,2.3 0 0 0 28.4,261.2" fill="none" stroke="#a3a8b0" stroke-width="1.8"/><path d="M24.66,287.28 L24.96,285.39 L27.34,285.39 L27.64,287.28 L29.35,287.99 L30.90,286.86 L32.59,288.55 L31.46,290.10 L32.17,291.81 L34.06,292.11 L34.06,294.49 L32.17,294.79 L31.46,296.50 L32.59,298.05 L30.90,299.74 L29.35,298.61 L27.64,299.32 L27.34,301.21 L24.96,301.21 L24.66,299.32 L22.95,298.61 L21.40,299.74 L19.71,298.05 L20.84,296.50 L20.13,294.79 L18.24,294.49 L18.24,292.11 L20.13,291.81 L20.84,290.10 L19.71,288.55 L21.40,286.86 L22.95,287.99 Z" fill="none" stroke="#a3a8b0" stroke-width="1.7" stroke-linejoin="round"/><circle cx="26.15" cy="293.3" r="2.6" fill="none" stroke="#a3a8b0" stroke-width="1.7"/><rect x="67.3" y="17.8" width="4.4" height="4.4" rx="0.5" fill="none" stroke="#c7c9cc" stroke-width="1.5"/><rect x="73.9" y="17.8" width="4.4" height="4.4" rx="0.5" fill="none" stroke="#c7c9cc" stroke-width="1.5"/><rect x="67.3" y="24.4" width="4.4" height="4.4" rx="0.5" fill="none" stroke="#c7c9cc" stroke-width="1.5"/><rect x="73.9" y="24.4" width="4.4" height="4.4" rx="0.5" fill="none" stroke="#c7c9cc" stroke-width="1.5"/><rect x="682.6" y="17.6" width="11.6" height="9.2" rx="1.6" fill="none" stroke="#8e9298" stroke-width="1.5"/><line x1="683" y1="24.1" x2="694" y2="24.1" stroke="#8e9298" stroke-width="1.4"/><rect x="685.8" y="27" width="5.4" height="2.6" rx="0.8" fill="none" stroke="#8e9298" stroke-width="1.3"/><circle cx="731.7" cy="23.55" r="6.1" fill="none" stroke="#8e9298" stroke-width="1.4"/><path d="M731.6,20.2 L731.6,23.5 L729.3,23.5" fill="none" stroke="#8e9298" stroke-width="1.4"/><path d="M831.3,22.2 L834.5,25.1 L837.8,22.0" fill="none" stroke="#8e9298" stroke-width="1.5"/><path d="M909.3,22.6 L912.3,25.4 L915.3,22.5" fill="none" stroke="#8e9298" stroke-width="1.4"/><path d="M860.5,20.0 A6.1,6.1 0 0 1 871.6,21.8" fill="none" stroke="#8e9298" stroke-width="1.4"/><path d="M871.1,26.8 A6.1,6.1 0 0 1 860.0,25.0" fill="none" stroke="#8e9298" stroke-width="1.4"/><path d="M859.6,17.6 L860.0,20.6 L863.0,20.2" fill="none" stroke="#8e9298" stroke-width="1.4"/><path d="M872.0,29.2 L871.6,26.2 L868.6,26.6" fill="none" stroke="#8e9298" stroke-width="1.4"/><line x1="881.5" y1="10" x2="881.5" y2="36" stroke="#202226" stroke-width="1"/><path d="M428.70,79.20 C424.62,75.86 423.40,73.48 424.21,71.98 C425.64,70.05 427.88,70.58 428.70,72.16 C429.52,70.58 431.76,70.05 433.19,71.98 C434.00,73.48 432.78,75.86 428.70,79.20 Z" fill="#299c46"/><path d="M433.90,410.30 C429.82,406.96 428.60,404.58 429.41,403.08 C430.84,401.15 433.08,401.68 433.90,403.26 C434.72,401.68 436.96,401.15 438.39,403.08 C439.20,404.58 437.98,406.96 433.90,410.30 Z" fill="#299c46"/>
</svg>
<div class="t" style="left:88.00px;top:16.66px;font-size:16px;color:#d8d9da;transform:scaleX(0.9361);">GDO Pi Sensors</div><div class="t" style="left:742.90px;top:16.05px;font-size:14px;color:#c4c7cc;transform:scaleX(0.8829);">Last 24 hours</div><div class="t" style="left:887.80px;top:16.15px;font-size:14px;color:#eb7b18;-webkit-text-stroke:0.35px #eb7b18;transform:scaleX(0.8535);">1m</div><div class="t" style="left:438.60px;top:68.40px;font-size:13px;color:#d8d9da;-webkit-text-stroke:0.35px #d8d9da;transform:scaleX(0.9368);">Pestera Temperature</div><div class="t" style="left:443.40px;top:399.40px;font-size:13px;color:#d8d9da;-webkit-text-stroke:0.35px #d8d9da;transform:scaleX(0.9394);">Home Temperature</div><div class="t" style="left:429.60px;top:730.00px;font-size:13px;color:#d8d9da;-webkit-text-stroke:0.35px #d8d9da;transform:scaleX(0.9311);">Pestera - Water Level</div><div class="t" style="left:80.52px;top:329.07px;font-size:11.5px;color:#d8d9da;transform:scaleX(0.9500);">0</div><div class="t" style="left:80.52px;top:282.67px;font-size:11.5px;color:#d8d9da;transform:scaleX(0.9500);">5</div><div class="t" style="left:74.45px;top:236.27px;font-size:11.5px;color:#d8d9da;transform:scaleX(0.9500);">10</div><div class="t" style="left:74.45px;top:189.87px;font-size:11.5px;color:#d8d9da;transform:scaleX(0.9500);">15</div><div class="t" style="left:74.45px;top:143.47px;font-size:11.5px;color:#d8d9da;transform:scaleX(0.9500);">20</div><div class="t" style="left:74.45px;top:97.07px;font-size:11.5px;color:#d8d9da;transform:scaleX(0.9500);">25</div><div class="t" style="left:117.60px;top:342.47px;font-size:11.5px;color:#d8d9da;transform:scaleX(0.8896);">18:00</div><div class="t" style="left:185.45px;top:342.47px;font-size:11.5px;color:#d8d9da;transform:scaleX(0.8896);">20:00</div><div class="t" style="left:253.30px;top:342.47px;font-size:11.5px;color:#d8d9da;transform:scaleX(0.8896);">22:00</div><div class="t" style="left:321.15px;top:342.47px;font-size:11.5px;color:#d8d9da;transform:scaleX(0.8896);">00:00</div><div class="t" style="left:389.00px;top:342.47px;font-size:11.5px;color:#d8d9da;transform:scaleX(0.8896);">02:00</div><div class="t" style="left:456.85px;top:342.47px;font-size:11.5px;color:#d8d9da;transform:scaleX(0.8896);">04:00</div><div class="t" style="left:524.70px;top:342.47px;font-size:11.5px;color:#d8d9da;transform:scaleX(0.8896);">06:00</div><div class="t" style="left:592.55px;top:342.47px;font-size:11.5px;color:#d8d9da;transform:scaleX(0.8896);">08:00</div><div class="t" style="left:660.40px;top:342.47px;font-size:11.5px;color:#d8d9da;transform:scaleX(0.8896);">10:00</div><div class="t" style="left:728.25px;top:342.47px;font-size:11.5px;color:#d8d9da;transform:scaleX(0.8896);">12:00</div><div class="t" style="left:796.10px;top:342.47px;font-size:11.5px;color:#d8d9da;transform:scaleX(0.8896);">14:00</div><div class="t" style="left:863.95px;top:342.47px;font-size:11.5px;color:#d8d9da;transform:scaleX(0.8896);">16:00</div><div class="t" style="left:74.45px;top:659.77px;font-size:11.5px;color:#d8d9da;transform:scaleX(0.9500);">18</div><div class="t" style="left:74.45px;top:601.77px;font-size:11.5px;color:#d8d9da;transform:scaleX(0.9500);">20</div><div class="t" style="left:74.45px;top:543.77px;font-size:11.5px;color:#d8d9da;transform:scaleX(0.9500);">22</div><div class="t" style="left:74.45px;top:485.77px;font-size:11.5px;color:#d8d9da;transform:scaleX(0.9500);">24</div><div class="t" style="left:74.45px;top:427.77px;font-size:11.5px;color:#d8d9da;transform:scaleX(0.9500);">26</div><div class="t" style="left:117.60px;top:672.77px;font-size:11.5px;color:#d8d9da;transform:scaleX(0.8896);">18:00</div><div class="t" style="left:185.45px;top:672.77px;font-size:11.5px;color:#d8d9da;transform:scaleX(0.8896);">20:00</div><div class="t" style="left:253.30px;top:672.77px;font-size:11.5px;color:#d8d9da;transform:scaleX(0.8896);">22:00</div><div class="t" style="left:321.15px;top:672.77px;font-size:11.5px;color:#d8d9da;transform:scaleX(0.8896);">00:00</div><div class="t" style="left:389.00px;top:672.77px;font-size:11.5px;color:#d8d9da;transform:scaleX(0.8896);">02:00</div><div class="t" style="left:456.85px;top:672.77px;font-size:11.5px;color:#d8d9da;transform:scaleX(0.8896);">04:00</div><div class="t" style="left:524.70px;top:672.77px;font-size:11.5px;color:#d8d9da;transform:scaleX(0.8896);">06:00</div><div class="t" style="left:592.55px;top:672.77px;font-size:11.5px;color:#d8d9da;transform:scaleX(0.8896);">08:00</div><div class="t" style="left:660.40px;top:672.77px;font-size:11.5px;color:#d8d9da;transform:scaleX(0.8896);">10:00</div><div class="t" style="left:728.25px;top:672.77px;font-size:11.5px;color:#d8d9da;transform:scaleX(0.8896);">12:00</div><div class="t" style="left:796.10px;top:672.77px;font-size:11.5px;color:#d8d9da;transform:scaleX(0.8896);">14:00</div><div class="t" style="left:863.95px;top:672.77px;font-size:11.5px;color:#d8d9da;transform:scaleX(0.8896);">16:00</div><div class="t" style="left:74.32px;top:957.97px;font-size:11.5px;color:#d8d9da;transform:scaleX(0.9500);">0</div><div class="t" style="left:74.32px;top:918.13px;font-size:11.5px;color:#d8d9da;transform:scaleX(0.9500);">1</div><div class="t" style="left:74.32px;top:878.29px;font-size:11.5px;color:#d8d9da;transform:scaleX(0.9500);">2</div><div class="t" style="left:74.32px;top:838.45px;font-size:11.5px;color:#d8d9da;transform:scaleX(0.9500);">3</div><div class="t" style="left:74.32px;top:798.61px;font-size:11.5px;color:#d8d9da;transform:scaleX(0.9500);">4</div><div class="t" style="left:74.32px;top:758.77px;font-size:11.5px;color:#d8d9da;transform:scaleX(0.9500);">5</div><div class="t" style="left:114.60px;top:970.67px;font-size:11.5px;color:#d8d9da;transform:scaleX(0.8896);">18:00</div><div class="t" style="left:182.65px;top:970.67px;font-size:11.5px;color:#d8d9da;transform:scaleX(0.8896);">20:00</div><div class="t" style="left:250.70px;top:970.67px;font-size:11.5px;color:#d8d9da;transform:scaleX(0.8896);">22:00</div><div class="t" style="left:318.75px;top:970.67px;font-size:11.5px;color:#d8d9da;transform:scaleX(0.8896);">00:00</div><div class="t" style="left:386.80px;top:970.67px;font-size:11.5px;color:#d8d9da;transform:scaleX(0.8896);">02:00</div><div class="t" style="left:454.85px;top:970.67px;font-size:11.5px;color:#d8d9da;transform:scaleX(0.8896);">04:00</div><div class="t" style="left:522.90px;top:970.67px;font-size:11.5px;color:#d8d9da;transform:scaleX(0.8896);">06:00</div><div class="t" style="left:590.95px;top:970.67px;font-size:11.5px;color:#d8d9da;transform:scaleX(0.8896);">08:00</div><div class="t" style="left:659.00px;top:970.67px;font-size:11.5px;color:#d8d9da;transform:scaleX(0.8896);">10:00</div><div class="t" style="left:727.05px;top:970.67px;font-size:11.5px;color:#d8d9da;transform:scaleX(0.8896);">12:00</div><div class="t" style="left:795.10px;top:970.67px;font-size:11.5px;color:#d8d9da;transform:scaleX(0.8896);">14:00</div><div class="t" style="left:863.15px;top:970.67px;font-size:11.5px;color:#d8d9da;transform:scaleX(0.8896);">16:00</div><div class="t" style="left:99.30px;top:363.34px;font-size:12px;color:#d8d9da;transform:scaleX(0.8810);">pestera etaj - inside temp</div><div class="t" style="left:244.80px;top:363.34px;font-size:12px;color:#d8d9da;transform:scaleX(0.8826);">pestera etaj - outside temp</div><div class="t" style="left:396.80px;top:363.34px;font-size:12px;color:#d8d9da;transform:scaleX(0.8708);">pestera garage - basement temp</div><div class="t" style="left:99.70px;top:694.34px;font-size:12px;color:#d8d9da;transform:scaleX(0.8833);">home mogo - inside temp</div><div class="t" style="left:99.70px;top:992.14px;font-size:12px;color:#d8d9da;transform:scaleX(0.8709);">pestera water - level</div>
</body></html>
